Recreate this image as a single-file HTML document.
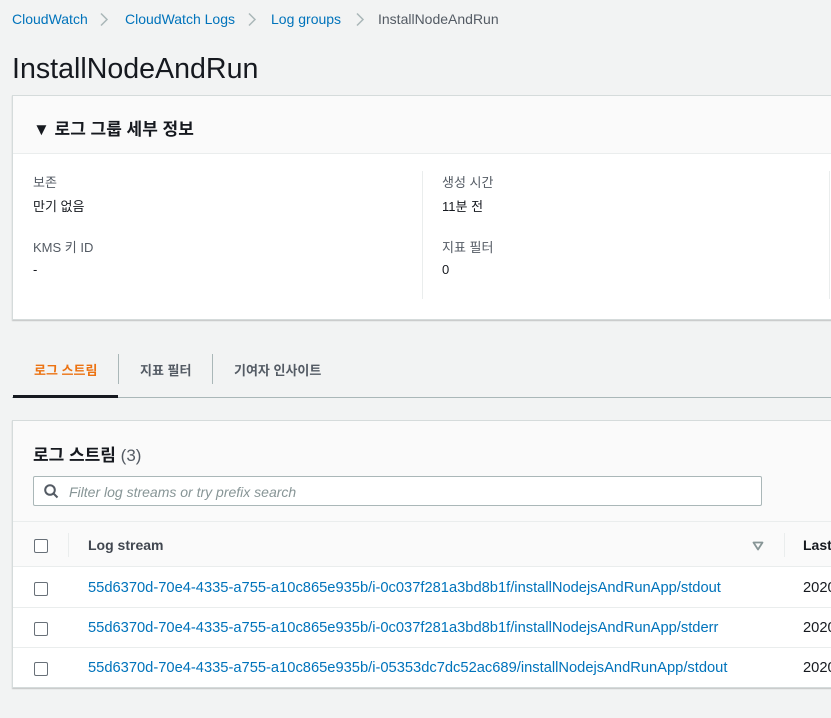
<!DOCTYPE html>
<html><head><meta charset="utf-8"><style>
*{box-sizing:border-box;margin:0;padding:0}
body{width:831px;height:718px;overflow:hidden;background:#f2f3f3;font-family:"Liberation Sans","Noto Sans CJK KR",sans-serif;color:#16191f;font-size:14px;position:relative}
.a{position:absolute;white-space:nowrap}
.bl{color:#0073bb}
.lbl{color:#545b64;font-size:13px}
.cb{position:absolute;width:14px;height:14px;border:1px solid #687078;border-radius:2px;background:#fff}
.lk{font-size:14.7px}
</style></head><body>
<div class="a bl" style="left:12px;top:11px;font-size:14px">CloudWatch</div>
<svg class="a" style="left:99px;top:12px" width="10" height="15" viewBox="0 0 10 15"><path d="M2 1.5L8 7.5L2 13.5" fill="none" stroke="#aab7b8" stroke-width="1.5"/></svg>
<div class="a bl" style="left:125px;top:11px">CloudWatch Logs</div>
<svg class="a" style="left:247px;top:12px" width="10" height="15" viewBox="0 0 10 15"><path d="M2 1.5L8 7.5L2 13.5" fill="none" stroke="#aab7b8" stroke-width="1.5"/></svg>
<div class="a bl" style="left:271px;top:11px">Log groups</div>
<svg class="a" style="left:355px;top:12px" width="10" height="15" viewBox="0 0 10 15"><path d="M2 1.5L8 7.5L2 13.5" fill="none" stroke="#aab7b8" stroke-width="1.5"/></svg>
<div class="a" style="left:378px;top:11px;color:#545b64">InstallNodeAndRun</div>
<div class="a" style="left:12px;top:53px;font-size:28.6px">InstallNodeAndRun</div>

<div class="a" style="left:12px;top:95px;width:830px;height:225px;background:#fff;border:1px solid #d5dbdb;box-shadow:0 1px 1px rgba(0,0,0,.2)">
 <div style="height:58px;background:#fafafa;border-bottom:1px solid #eaeded"></div>
 <div class="a" style="left:20px;top:19px;font-size:17px;font-weight:bold">▼ 로그 그룹 세부 정보</div>
 <div class="a lbl" style="left:20px;top:76px">보존</div>
 <div class="a" style="left:20px;top:100px;font-size:13px">만기 없음</div>
 <div class="a lbl" style="left:20px;top:141px">KMS 키 ID</div>
 <div class="a" style="left:20px;top:166px;font-size:13px">-</div>
 <div class="a" style="left:409px;top:75px;width:1px;height:128px;background:#eaeded"></div>
 <div class="a lbl" style="left:429px;top:76px">생성 시간</div>
 <div class="a" style="left:429px;top:100px;font-size:13px">11분 전</div>
 <div class="a lbl" style="left:429px;top:141px">지표 필터</div>
 <div class="a" style="left:429px;top:166px;font-size:13px">0</div>
 <div class="a" style="left:816px;top:75px;width:1px;height:128px;background:#eaeded"></div>
</div>

<div class="a" style="left:12px;top:397px;width:819px;height:1px;background:#aab7b8"></div>
<div class="a" style="left:13px;top:395px;width:105px;height:3px;background:#16191f"></div>
<div class="a" style="left:34px;top:360px;color:#ec7211;font-weight:bold;font-size:13px">로그 스트림</div>
<div class="a" style="left:118px;top:354px;width:1px;height:30px;background:#aab7b8"></div>
<div class="a" style="left:140px;top:360px;color:#545b64;font-weight:bold;font-size:13px">지표 필터</div>
<div class="a" style="left:212px;top:354px;width:1px;height:30px;background:#aab7b8"></div>
<div class="a" style="left:234px;top:360px;color:#545b64;font-weight:bold;font-size:13px">기여자 인사이트</div>

<div class="a" style="left:12px;top:420px;width:830px;height:268px;background:#fff;border:1px solid #d5dbdb;box-shadow:0 1px 1px rgba(0,0,0,.2)">
 <div style="height:101px;background:#fafafa;border-bottom:1px solid #eaeded"></div>
 <div class="a" style="left:20px;top:20px;font-size:17px;font-weight:bold">로그 스트림 <span style="font-weight:normal;color:#545b64">(3)</span></div>
 <div class="a" style="left:20px;top:55px;width:729px;height:30px;border:1px solid #aab7b8;border-radius:2px;background:#fff">
  <svg class="a" style="left:10px;top:7px" width="15" height="15" viewBox="0 0 15 15"><circle cx="6" cy="6" r="4.8" fill="none" stroke="#545b64" stroke-width="2"/><path d="M9.5 9.5L13.5 13.5" stroke="#545b64" stroke-width="2"/></svg>
  <div class="a" style="left:35px;top:7px;color:#879596;font-style:italic;font-size:14px">Filter log streams or try prefix search</div>
 </div>
 <div class="a" style="left:0;top:101px;width:830px;height:45px;background:#fafafa;border-bottom:1px solid #eaeded"></div>
 <div class="cb" style="left:21px;top:118px"></div>
 <div class="a" style="left:55px;top:112px;width:1px;height:24px;background:#eaeded"></div>
 <div class="a" style="left:75px;top:116px;font-weight:bold;color:#414750">Log stream</div>
 <svg class="a" style="left:739px;top:120px" width="12" height="10" viewBox="0 0 12 10"><path d="M1.5 1.5H10.5L6 8.5Z" fill="none" stroke="#879596" stroke-width="1.8" stroke-linejoin="round"/></svg>
 <div class="a" style="left:771px;top:112px;width:1px;height:24px;background:#eaeded"></div>
 <div class="a" style="left:790px;top:116px;font-weight:bold">Last</div>
 <div class="a" style="left:0;top:186px;width:830px;height:1px;background:#eaeded"></div>
 <div class="a" style="left:0;top:226px;width:830px;height:1px;background:#eaeded"></div>
 <div class="cb" style="left:21px;top:161px"></div>
 <div class="a bl lk" style="left:75px;top:159px">55d6370d-70e4-4335-a755-a10c865e935b/i-0c037f281a3bd8b1f/installNodejsAndRunApp/stdout</div>
 <div class="a lk" style="left:790px;top:159px">2020</div>
 <div class="cb" style="left:21px;top:201px"></div>
 <div class="a bl lk" style="left:75px;top:199px">55d6370d-70e4-4335-a755-a10c865e935b/i-0c037f281a3bd8b1f/installNodejsAndRunApp/stderr</div>
 <div class="a lk" style="left:790px;top:199px">2020</div>
 <div class="cb" style="left:21px;top:241px"></div>
 <div class="a bl lk" style="left:75px;top:239px">55d6370d-70e4-4335-a755-a10c865e935b/i-05353dc7dc52ac689/installNodejsAndRunApp/stdout</div>
 <div class="a lk" style="left:790px;top:239px">2020</div>
</div>
</body></html>
